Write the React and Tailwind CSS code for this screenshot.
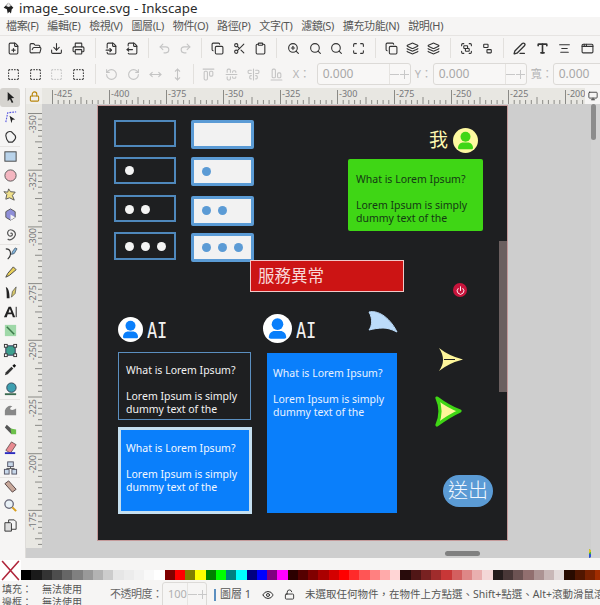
import {
  FilePlus, FolderOpen, Download, Printer, FileInput, FileOutput, Undo2, Redo2, Copy, Scissors, Clipboard,
  ZoomIn, Search, Maximize, Layers, Group, Ungroup, Type, AlignCenter, AppWindow, RotateCcw, RotateCw,
  MoveHorizontal, MoveVertical, AlignStartHorizontal, AlignCenterHorizontal, AlignCenterVertical, AlignEndHorizontal,
  SquareDashed, Lock, LockOpen, Eye, Monitor, PenLine, Power,
} from "lucide-react";

const CJK = "font-['Noto_Sans','Noto_Sans_CJK_TC',sans-serif]";

const menus = ["檔案(F)", "編輯(E)", "檢視(V)", "圖層(L)", "物件(O)", "路徑(P)", "文字(T)", "濾鏡(S)", "擴充功能(N)", "說明(H)"];

const greys = ["#000000", "#1a1a1a", "#333333", "#4d4d4d", "#666666", "#808080", "#999999", "#b3b3b3", "#cccccc", "#e6e6e6", "#ececec", "#f2f2f2", "#f9f9f9", "#ffffff"];
const basics = ["#800000", "#ff0000", "#808000", "#ffff00", "#008000", "#00ff00", "#008080", "#00ffff", "#000080", "#0000ff", "#800080", "#ff00ff"];
const reds = ["#2b0000", "#550000", "#800000", "#aa0000", "#d40000", "#ff0000", "#ff2a2a", "#ff5555", "#ff8080", "#ffaaaa", "#ffd5d5"];
const maroons = ["#280b0b", "#501616", "#782121", "#a02c2c", "#c83737", "#d35f5f", "#de8787", "#e9afaf", "#f4d7d7"];
const browns = ["#241c1c", "#483737", "#6c5353", "#916f6f", "#ac9393", "#c8b7b7", "#e3dbdb"];
const oranges = ["#280b00", "#501600", "#782100", "#a02c00"];
const swatches = [...greys, ...basics, ...reds, ...maroons, ...browns, ...oranges];

function Sep() {
  return <div className="w-px h-[20px] bg-[#e2e0dd] mx-[5px] shrink-0" />;
}

function Tool({ icon: Icon, off, w = "w-[21.8px]", stroke = 2 }) {
  return (
    <div className={`${w} flex justify-center shrink-0`}>
      <Icon size={13} strokeWidth={stroke} className={off ? "text-[#c4c4c4]" : "text-[#333]"} />
    </div>
  );
}

function Stepper() {
  return (
    <span className="w-[21px] h-full border-l border-[#e6e4e1] flex items-center justify-center gap-[1px] text-[#c8c8c8] shrink-0">
      <span className="w-[9px] h-px bg-[#c8c8c8]" />
      <span className="relative w-[9px] h-px bg-[#c8c8c8]">
        <span className="absolute left-[4px] top-[-4px] w-px h-[9px] bg-[#c8c8c8]" />
      </span>
    </span>
  );
}

function NumBox({ value, w }) {
  return (
    <div className={`${w} h-[22px] border border-[#dcdad7] rounded-[3px] bg-[#f8f7f6] flex items-center shrink-0`}>
      <span className="flex-1 pl-[5px] text-[12px] text-[#a8a8a8]">{value}</span>
      <Stepper />
    </div>
  );
}

function HRuler() {
  const labels = [-425, -400, -375, -350, -325, -300, -275, -250, -225, -200];
  const ticks = [];
  for (let i = 0; i < 96; i++) {
    const x = 10.5 + i * 5.7;
    const h = i % 10 === 0 ? 14 : i % 5 === 0 ? 7 : 4;
    ticks.push(<line key={i} x1={x} x2={x} y1={16} y2={16 - h} stroke="#8a8a86" strokeWidth="1" />);
  }
  return (
    <div className="relative flex-1 h-[16px] bg-[#e8e7e2] overflow-hidden">
      <svg width="560" height="16" className="absolute left-0 top-0">{ticks}</svg>
      {labels.map((l, i) => (
        <span key={l} className="absolute top-[0px] text-[9px] leading-[11px] text-[#77777a]" style={{ left: 12 + i * 57 }}>{l}</span>
      ))}
    </div>
  );
}

function VRuler() {
  const labels = [-350, -325, -300, -275, -250, -225, -200, -175];
  const ticks = [];
  for (let i = 0; i < 78; i++) {
    const y = 9.5 + i * 5.67;
    const w = i % 10 === 0 ? 14 : i % 5 === 0 ? 7 : 4;
    ticks.push(<line key={i} y1={y} y2={y} x1={16} x2={16 - w} stroke="#8a8a86" strokeWidth="1" />);
  }
  return (
    <div className="relative w-[16px] h-[444px] bg-[#e8e7e2] overflow-hidden shrink-0">
      <svg width="16" height="444" className="absolute left-0 top-0">{ticks}</svg>
      {labels.map((l, i) => (
        <span key={l} className="absolute left-[1px] text-[9px] leading-[11px] text-[#77777a] [writing-mode:vertical-rl] rotate-180" style={{ top: 11 + i * 56.7 }}>{l}</span>
      ))}
    </div>
  );
}

function Person({ bg, fg, className }) {
  return (
    <svg viewBox="0 0 30 30" className={className}>
      <circle cx="15" cy="15" r="15" fill={bg} />
      <circle cx="15" cy="10.5" r="6" fill={fg} />
      <path d="M6 24c0-4 3-6.5 6-6.5h6c3 0 6 2.5 6 6.5 0 1-1 1.5-2 1.5H8c-1 0-2-.5-2-1.5z" fill={fg} />
    </svg>
  );
}

function Lorem({ className, color }) {
  return (
    <div className={`absolute text-[10.5px] leading-[13px] whitespace-nowrap font-['Noto_Sans',sans-serif] ${color} ${className}`}>
      <p>What is Lorem Ipsum?</p>
      <p className="mt-[13px]">Lorem Ipsum is simply</p>
      <p>dummy text of the</p>
    </div>
  );
}

function Dots({ n, color, className }) {
  return (
    <div className={`absolute flex gap-[7px] ${className}`}>
      {Array.from({ length: n }).map((_, i) => (
        <div key={i} className={`w-[9px] h-[9px] rounded-full ${color}`} />
      ))}
    </div>
  );
}

function AiLabel({ className }) {
  return (
    <span className={`absolute text-[17px] leading-[22px] tracking-[-0.2px] scale-y-[1.25] font-['DejaVu_Sans_Mono',monospace] font-extralight text-[#f2f2f2] ${className}`}>AI</span>
  );
}

// coloured tools in the left dock
function ToolIcon({ children }) {
  return <svg viewBox="0 0 16 16" width="15" height="15">{children}</svg>;
}

const leftTools = [
  <ToolIcon><path d="M5 2l7 6.5-3.2.3L11 13l-1.6.8-2-4.2L5 12z" fill="#222" /></ToolIcon>,
  <ToolIcon><path d="M3 13L5 3l9-1" fill="none" stroke="#5a5ae0" strokeWidth="1.2" strokeDasharray="2 1" /><path d="M7 6l6 4-3 .5L9 14z" fill="#222" /></ToolIcon>,
  <ToolIcon><path d="M3 7c0-3 3-5 6-4l4 4c1 2 0 4-1 5l-2 2H6L4 11z" fill="#f4f4f4" stroke="#333" strokeWidth="1.2" /></ToolIcon>,
  <ToolIcon><rect x="2" y="3" width="12" height="10" fill="#b9d3ea" stroke="#444" strokeWidth="1" /></ToolIcon>,
  <ToolIcon><circle cx="8" cy="8" r="6" fill="#f4b6c0" stroke="#555" strokeWidth="1" /></ToolIcon>,
  <ToolIcon><path d="M6 2l2 3 5 .5-3 3.5 2 5-5-2.5L3 13l1-5-3-3 4 .5z" fill="#f0e08a" stroke="#555" strokeWidth="1" /></ToolIcon>,
  <ToolIcon><path d="M8 2l5 3v6l-5 3-5-3V5z" fill="#8f8fd8" stroke="#555" strokeWidth="1" /><path d="M8 8l5 3-5 3z" fill="#f4f4f4" /></ToolIcon>,
  <ToolIcon><path d="M8 8c1-1 2 0 2 1s-2 3-4 1-1-6 2-6 6 3 5 6-5 6-8 4" fill="none" stroke="#555" strokeWidth="1.3" /></ToolIcon>,
  <ToolIcon><path d="M3 3c2 0 5 1 5 5s-2 5-3 6" fill="none" stroke="#333" strokeWidth="1.2" /><path d="M10 6l3-4 2 1-3 5-3 1z" fill="#7fb0d8" stroke="#345" strokeWidth=".7" /></ToolIcon>,
  <ToolIcon><path d="M3 13l2-4 6-7 3 3-7 6z" fill="#e8cf5a" stroke="#444" strokeWidth="1" /></ToolIcon>,
  <ToolIcon><path d="M3 2c3 1 4 6 4 12H4c0-4 0-8-1-12z" fill="#222" /><path d="M9 13l1-6 4-5-1 7z" fill="#d8c86a" stroke="#444" strokeWidth=".7" /></ToolIcon>,
  <ToolIcon><path d="M1 14L6 3h2.5L13 14h-2.5l-1-3H5l-1 3zM5.8 9h3L7.3 5z" fill="#222" /><rect x="13.5" y="3" width="1.2" height="11" fill="#444" /></ToolIcon>,
  <ToolIcon><rect x="2" y="2" width="12" height="12" fill="#9fd8a8" /><path d="M4 4l8 8" stroke="#3c7a4a" strokeWidth="1.6" /></ToolIcon>,
  <ToolIcon><rect x="3" y="3" width="10" height="10" fill="#3ea08e" stroke="#335" /><rect x="1.5" y="1.5" width="3" height="3" fill="#fff" stroke="#333" /><rect x="11.5" y="1.5" width="3" height="3" fill="#fff" stroke="#333" /><rect x="1.5" y="11.5" width="3" height="3" fill="#fff" stroke="#333" /><rect x="11.5" y="11.5" width="3" height="3" fill="#fff" stroke="#333" /></ToolIcon>,
  <ToolIcon><path d="M2 14l1-3 6-6 2 2-6 6z" fill="#333" /><path d="M10 4l2-2 2 2-2 2z" fill="#111" /></ToolIcon>,
  <ToolIcon><circle cx="9" cy="6" r="5" fill="#3d9fb0" stroke="#345" /><path d="M2 14h12v-2H2z" fill="#3c6a50" /></ToolIcon>,
  <ToolIcon><path d="M2 14V9c2-5 6-6 8-4-2 0-3 2-2 3 2 1 4 0 6-1v7z" fill="#888" /></ToolIcon>,
  <ToolIcon><path d="M4 4l7 6-2 4-7-7z" fill="#555" /><path d="M8 8l6 1 0 5-5 0z" fill="#6cc04a" /></ToolIcon>,
  <ToolIcon><path d="M3 11l6-9 5 3-6 9z" fill="#e88a90" stroke="#544" strokeWidth=".8" /><path d="M2 15h11v-2H2z" fill="#2b2bc0" /></ToolIcon>,
  <ToolIcon><rect x="5" y="2" width="6" height="5" fill="#c8d8ea" stroke="#556" /><rect x="1.5" y="10" width="5" height="5" fill="#c8d8ea" stroke="#556" /><rect x="9.5" y="10" width="5" height="5" fill="#c8d8ea" stroke="#556" /><path d="M8 7v2M4 10V9h8v1" stroke="#555" fill="none" /></ToolIcon>,
  <ToolIcon><path d="M2 5l4-3 8 9-4 3z" fill="#c8a89a" stroke="#544" /></ToolIcon>,
  <ToolIcon><circle cx="6.5" cy="6.5" r="4.5" fill="#e8f0f6" stroke="#667" strokeWidth="1.4" /><path d="M10 10l4 4" stroke="#d8a020" strokeWidth="2.2" /></ToolIcon>,
  <ToolIcon><path d="M6 2h6l2 2v8H6z" fill="#f6f6f6" stroke="#333" /><path d="M2 5h6l1 1v8H2z" fill="#ddd" stroke="#333" /></ToolIcon>,
];

const dockBreaks = [3, 8, 16, 20];

export default function App() {
  return (
    <div className={`w-[600px] h-[605px] overflow-hidden bg-[#f6f5f4] flex flex-col ${CJK}`}>
      {/* title bar */}
      <div className="h-[17px] bg-white flex items-center pl-[2px] gap-[4px] shrink-0">
        <svg viewBox="0 0 16 16" width="13" height="13">
          <path d="M8 1l6 6-2 2-1 5-2-2-2 2-1-5-4-2z" fill="#222" />
          <path d="M8 1L5 5l3 1 3-1z" fill="#eee" />
        </svg>
        <span className="text-[13.3px] leading-[15px] text-[#2b2b2b] whitespace-nowrap">image_source.svg - Inkscape</span>
      </div>

      {/* menu */}
      <div className="h-[19px] flex items-center pl-[6px] gap-[8.8px] shrink-0 border-b border-[#e6e4e2]">
        {menus.map((m) => (
          <span key={m} className="text-[11px] leading-[14px] text-[#555] whitespace-nowrap tracking-[-0.35px]">{m}</span>
        ))}
      </div>

      {/* commands */}
      <div className="h-[24px] flex items-center pl-[2.5px] shrink-0">
        <Tool icon={FilePlus} /><Tool icon={FolderOpen} /><Tool icon={Download} /><Tool icon={Printer} />
        <Sep />
        <Tool icon={FileInput} w="w-[21px]" /><Tool icon={FileOutput} w="w-[21px]" />
        <Sep />
        <Tool icon={Undo2} off w="w-[21px]" /><Tool icon={Redo2} off w="w-[21px]" />
        <Sep />
        <Tool icon={Copy} w="w-[21.6px]" /><Tool icon={Scissors} w="w-[21.6px]" /><Tool icon={Clipboard} w="w-[21.6px]" />
        <Sep />
        <Tool icon={ZoomIn} /><Tool icon={Search} /><Tool icon={Search} /><Tool icon={Maximize} />
        <Sep />
        <Tool icon={Copy} w="w-[21.3px]" /><Tool icon={Layers} w="w-[21.3px]" /><Tool icon={Layers} w="w-[21.3px]" />
        <Sep />
        <Tool icon={Group} w="w-[21px]" /><Tool icon={Ungroup} w="w-[21px]" />
        <Sep />
        <Tool icon={PenLine} stroke={2.4} w="w-[22.5px]" /><Tool icon={Type} stroke={3} w="w-[22.5px]" /><Tool icon={AlignCenter} w="w-[22.5px]" /><Tool icon={AppWindow} w="w-[22.5px]" />
      </div>

      {/* select toolbar */}
      <div className="h-[28px] flex items-center pl-[2.5px] shrink-0">
        <Tool icon={SquareDashed} /><Tool icon={SquareDashed} /><Tool icon={SquareDashed} off /><Tool icon={SquareDashed} />
        <Sep />
        <Tool icon={RotateCcw} off w="w-[22px]" /><Tool icon={RotateCw} off w="w-[22px]" /><Tool icon={MoveHorizontal} off w="w-[22px]" /><Tool icon={MoveVertical} off w="w-[22px]" />
        <div className="w-px h-[20px] bg-[#e2e0dd] mx-[4px] shrink-0" />
        <Tool icon={AlignStartHorizontal} off w="w-[22.5px]" /><Tool icon={AlignCenterHorizontal} off w="w-[22.5px]" /><Tool icon={AlignCenterVertical} off w="w-[22.5px]" /><Tool icon={AlignEndHorizontal} off w="w-[22.5px]" />
        <span className="ml-[5px] w-[24px] text-[11px] text-[#b4b4b4] whitespace-nowrap shrink-0">X：</span>
        <NumBox value="0.000" w="w-[94px]" />
        <span className="ml-[4px] w-[18px] text-[11px] text-[#b4b4b4] whitespace-nowrap shrink-0">Y：</span>
        <NumBox value="0.000" w="w-[94px]" />
        <span className="ml-[4px] w-[22px] text-[11px] text-[#b4b4b4] whitespace-nowrap shrink-0">寬：</span>
        <NumBox value="0.000" w="w-[94px]" />
      </div>

      {/* main */}
      <div className="flex-1 flex min-h-0">
        <div className="w-[26px] shrink-0 border-r border-[#dedcd9] flex flex-col items-stretch">
          {leftTools.map((t, i) => (
            <div key={i} className={`h-[19.45px] w-[20px] flex items-center justify-center shrink-0 ${i === 0 ? "bg-[#d6d4d0] rounded-[3px]" : ""} ${dockBreaks.includes(i) ? "border-t border-[#e6e4e2]" : ""}`}>{t}</div>
          ))}
        </div>

        <div className="flex-1 flex flex-col min-w-0 bg-[#cecece]">
          <div className="flex h-[16px] shrink-0">
            <div className="w-[16px] h-[16px] bg-[#f0efec] flex items-center justify-center shrink-0">
              <Lock size={11} strokeWidth={2.4} className="text-[#b8860b]" />
            </div>
            <HRuler />
            <div className="w-[15px] bg-[#f6f5f4] flex items-center justify-center shrink-0">
              <Monitor size={10} className="text-[#333]" />
            </div>
          </div>

          <div className="flex-1 flex min-h-0">
            <VRuler />
            <div className="flex-1 min-w-0">
              {/* drawing page */}
              <div className="relative ml-[55px] mt-px w-[411px] h-[436px] bg-[#1e1f21] border border-[#c49a9a]">
                <div className="absolute left-[16px] top-[14px] w-[62px] h-[27px] border-2 border-[#4f88bc]" />
                <div className="absolute left-[16px] top-[51px] w-[62px] h-[27px] border-2 border-[#4f88bc]" />
                <div className="absolute left-[16px] top-[89px] w-[62px] h-[27px] border-2 border-[#4f88bc]" />
                <div className="absolute left-[16px] top-[126px] w-[62px] h-[28px] border-2 border-[#4f88bc]" />
                <Dots n={1} color="bg-[#f4f4f4]" className="left-[27px] top-[60px]" />
                <Dots n={2} color="bg-[#f4f4f4]" className="left-[27px] top-[99px]" />
                <Dots n={3} color="bg-[#f4f4f4]" className="left-[27px] top-[136px]" />

                <div className="absolute left-[93px] top-[14px] w-[63px] h-[29px] border-[3px] border-[#5b9bd5] bg-[#f2f2f2] rounded-[2px]" />
                <div className="absolute left-[93px] top-[51px] w-[63px] h-[29px] border-[3px] border-[#5b9bd5] bg-[#f2f2f2] rounded-[2px]" />
                <div className="absolute left-[93px] top-[90px] w-[63px] h-[30px] border-[3px] border-[#5b9bd5] bg-[#f2f2f2] rounded-[2px]" />
                <div className="absolute left-[93px] top-[127px] w-[63px] h-[29px] border-[3px] border-[#5b9bd5] bg-[#f2f2f2] rounded-[2px]" />
                <Dots n={1} color="bg-[#5b9bd5]" className="left-[104px] top-[61px]" />
                <Dots n={2} color="bg-[#5b9bd5]" className="left-[104px] top-[100px]" />
                <Dots n={3} color="bg-[#5b9bd5]" className="left-[104px] top-[137px]" />

                <div className="absolute left-[152px] top-[154px] w-[154px] h-[32px] bg-[#cc1414] border border-[#f0c8c8] pl-[7px] text-[16.5px] leading-[30px] text-[#f8d8d8]">服務異常</div>

                <span className="absolute left-[331px] top-[22px] text-[19px] leading-[24px] text-[#fdf8b0]">我</span>
                <Person bg="#fdf9a0" fg="#3fd615" className="absolute left-[355px] top-[22px] w-[25px] h-[25px]" />
                <div className="absolute left-[250px] top-[53px] w-[135px] h-[72px] bg-[#3fd615] rounded-[2px]" />
                <Lorem color="text-[#143a14]" className="left-[258px] top-[67px]" />

                <div className="absolute left-[401px] top-[135px] w-[8px] h-[151px] bg-[#6b5f5f]" />

                <div className="absolute left-[355px] top-[177px] w-[14px] h-[14px] rounded-full bg-[#c8143c] flex items-center justify-center">
                  <Power size={9} strokeWidth={2.5} className="text-white" />
                </div>

                <Person bg="#ffffff" fg="#0a7ffb" className="absolute left-[20px] top-[211px] w-[25px] h-[25px]" />
                <AiLabel className="left-[49px] top-[213px]" />
                <Person bg="#ffffff" fg="#0a7ffb" className="absolute left-[165px] top-[208px] w-[29px] h-[29px]" />
                <AiLabel className="left-[198px] top-[213px]" />

                <svg viewBox="0 0 30 24" className="absolute left-[270px] top-[204px] w-[30px] h-[24px]">
                  <path d="M1 2c8-2 20 4 28 20-6-3-10-4-14-4-5 0-10 1-14 2 3-4 4-11 0-18z" fill="#bcdcfb" stroke="#bcdcfb" strokeLinejoin="round" />
                </svg>

                <div className="absolute left-[20px] top-[246px] w-[133px] h-[68px] border border-[#5b8fc0]" />
                <Lorem color="text-[#f2f2f2]" className="left-[28px] top-[258px]" />

                <div className="absolute left-[169px] top-[247px] w-[130px] h-[160px] bg-[#0a7ffb]" />
                <Lorem color="text-[#e8f2ff]" className="left-[175px] top-[261px]" />

                <div className="absolute left-[20px] top-[321px] w-[134px] h-[87px] bg-[#0a7ffb] border-[3px] border-[#c5dff0]" />
                <Lorem color="text-[#f2f8ff]" className="left-[28px] top-[336px]" />

                <svg viewBox="0 0 24 23" className="absolute left-[341px] top-[242px] w-[24px] h-[23px]">
                  <path d="M0 0Q10 8 24 11.5Q10 15 0 23Q8 12 0 0z" fill="#fdf59a" />
                  <path d="M5 11.5h11" stroke="#1e1f21" strokeWidth="1" />
                </svg>
                <svg viewBox="0 0 27 31" className="absolute left-[337px] top-[290px] w-[27px] h-[31px]">
                  <path d="M2 2Q14 11 25 15Q14 20 2 29Q8 15 2 2z" fill="#fdf59a" stroke="#3fd615" strokeWidth="3.2" strokeLinejoin="round" />
                </svg>

                <div className="absolute left-[345px] top-[369px] w-[50px] h-[32px] rounded-full bg-[#5b9bd5] flex items-center justify-center text-[20px] leading-none font-light text-[#f2f8ff]">送出</div>
              </div>
              <div className="relative">
                <div className="absolute left-[403px] top-[10px] w-[35px] h-[5px] rounded-full bg-[#808080]" />
                <svg viewBox="0 0 10 11" className="absolute left-[546px] top-[7px] w-[10px] h-[11px]">
                  <path d="M1 1l8 5-8 4z" fill="#3fb53f" />
                  <path d="M1 6l8 0-8 4z" fill="#3050d8" />
                  <path d="M1 1l3 2-3 2z" fill="#e8c020" />
                </svg>
              </div>
            </div>
            <div className="w-[9px] shrink-0 bg-[#d2d2d2] relative">
              <div className="absolute left-[0px] top-0 w-[5px] h-[36px] rounded-full bg-[#8c8c8c]" />
            </div>
          </div>
        </div>
      </div>

      {/* palette */}
      <div className="h-[23px] flex items-end shrink-0 overflow-hidden bg-[#f6f5f4]">
        <svg viewBox="0 0 20 20" width="21" height="21" className="shrink-0 bg-white">
          <path d="M2 1l16 18M18 1L2 19" stroke="#b0263c" strokeWidth="1.5" fill="none" />
        </svg>
        <div className="flex h-[10px] mb-[1px]">
          {swatches.map((c, i) => (
            <div key={i} className="w-[10.25px] h-full shrink-0" style={{ backgroundColor: c }} />
          ))}
        </div>
      </div>

      {/* status */}
      <div className="h-[24px] flex items-center shrink-0 overflow-hidden relative pt-[3px]">
        <div className="w-[110px] pl-[2px] shrink-0 text-[10px] leading-[13px] text-[#555] mt-[3px]">
          <div className="flex"><span className="w-[40px]">填充：</span><span>無法使用</span></div>
          <div className="flex"><span className="w-[40px]">邊框：</span><span>無法使用</span></div>
        </div>
        <span className="w-[52px] text-[11px] text-[#666] whitespace-nowrap shrink-0 tracking-[-0.5px]">不透明度：</span>
        <div className="w-[45px] h-[26px] border border-[#dcdad7] rounded-t-[3px] flex items-center pl-[5px] text-[11px] text-[#b0b0b0] shrink-0">
          <span className="flex-1">100</span>
          <Stepper />
        </div>
        <div className="w-[2px] h-[12px] bg-[#5b8fc0] ml-[7px] shrink-0" />
        <span className="ml-[4px] w-[42px] text-[11px] text-[#555] whitespace-nowrap shrink-0">圖層 1</span>
        <Eye size={12} className="text-[#333] shrink-0" />
        <LockOpen size={11} className="text-[#333] ml-[10px] shrink-0" />
        <span className="ml-[10px] text-[10.5px] text-[#555] whitespace-nowrap">未選取任何物件，在物件上方點選、Shift+點選、Alt+滾動滑鼠滾動</span>
      </div>
    </div>
  );
}
